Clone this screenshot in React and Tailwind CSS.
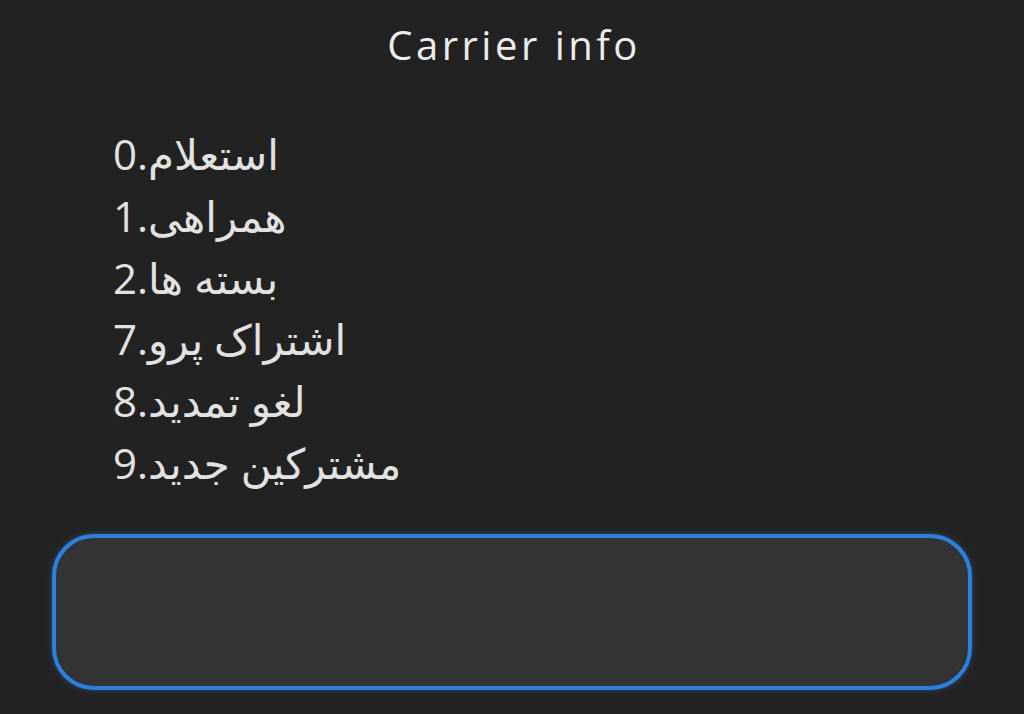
import React from "react";

const items = [
  { n: "0", label: "استعلام" },
  { n: "1", label: "همراهی" },
  { n: "2", label: "بسته ها" },
  { n: "7", label: "اشتراک پرو" },
  { n: "8", label: "لغو تمدید" },
  { n: "9", label: "مشترکین جدید" },
];

export default function App() {
  return (
    <div className="w-[1024px] h-[714px] bg-[#222222] flex flex-col overflow-hidden">
      {/* Title */}
      <h1 className="pt-[19px] pl-[4px] text-center text-[40px] leading-[52px] font-medium text-[#ededed] font-['Open_Sans','DejaVu_Sans',sans-serif] tracking-[3.5px]">
        Carrier info
      </h1>

      {/* Menu */}
      <ul className="mt-[52px] pl-[113px] flex flex-col text-[#e2e2e2] font-['Open_Sans','DejaVu_Sans',sans-serif] text-[42px] leading-[61.8px]">
        {items.map((it) => (
          <li key={it.n} dir="ltr">
            {it.n}.{it.label}
          </li>
        ))}
      </ul>

      {/* Input */}
      <div className="mt-[40px] mx-[52px] h-[156px] rounded-[42px] border-[4px] border-[#2f7fdc] bg-[#333333] shadow-[0_0_6px_rgba(47,127,220,0.45)]" />
    </div>
  );
}
